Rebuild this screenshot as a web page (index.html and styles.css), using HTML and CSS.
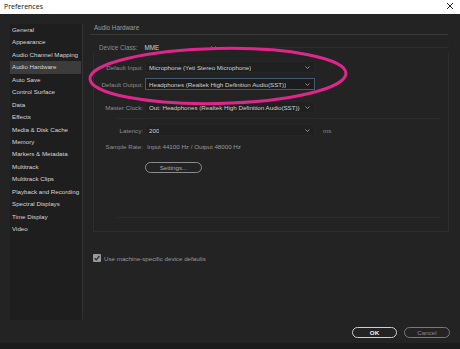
FILE: index.html
```html
<!DOCTYPE html>
<html>
<head>
<meta charset="utf-8">
<link rel="stylesheet" href="styles.css">
</head>
<body>
<div class="window">
  <div class="titlebar">
    <span class="title">Preferences</span>
    <svg class="close" width="8" height="8" viewBox="0 0 8 8"><path d="M1 1L7 7M7 1L1 7" stroke="#222" stroke-width="1" fill="none"/></svg>
  </div>
  <div class="main">
    <div class="content">
      <ul class="sidebar">
        <li>General</li>
        <li>Appearance</li>
        <li>Audio Channel Mapping</li>
        <li class="active">Audio Hardware</li>
        <li>Auto Save</li>
        <li>Control Surface</li>
        <li>Data</li>
        <li>Effects</li>
        <li>Media &amp; Disk Cache</li>
        <li>Memory</li>
        <li>Markers &amp; Metadata</li>
        <li>Multitrack</li>
        <li>Multitrack Clips</li>
        <li>Playback and Recording</li>
        <li>Spectral Displays</li>
        <li>Time Display</li>
        <li>Video</li>
      </ul>
      <div class="pane">
        <div class="section-title">Audio Hardware</div>
        <div class="device-row">
          <span class="device-label">Device Class:</span>
          <div class="select device-select"><span>MME</span><svg class="chev" width="5" height="3" viewBox="0 0 5 3"><path d="M0.5 0.5L2.5 2.5L4.5 0.5" stroke="#9a9a9a" stroke-width="0.9" fill="none"/></svg></div>
          <div class="device-line"></div>
        </div>
        <div class="group">
          <div class="grid r-input">
            <span class="label">Default Input:</span>
            <div class="select"><span class="val">Microphone (Yeti Stereo Microphone)</span><svg class="chev" width="5" height="3" viewBox="0 0 5 3"><path d="M0.5 0.5L2.5 2.5L4.5 0.5" stroke="#9a9a9a" stroke-width="0.9" fill="none"/></svg></div>
          </div>
          <div class="grid r-output">
            <span class="label">Default Output:</span>
            <div class="select focused"><span class="val">Headphones (Realtek High Definition Audio(SST))</span><svg class="chev" width="5" height="3" viewBox="0 0 5 3"><path d="M0.5 0.5L2.5 2.5L4.5 0.5" stroke="#9a9a9a" stroke-width="0.9" fill="none"/></svg></div>
          </div>
          <div class="grid r-clock">
            <span class="label">Master Clock:</span>
            <div class="select"><span class="val">Out: Headphones (Realtek High Definition Audio(SST))</span><svg class="chev" width="5" height="3" viewBox="0 0 5 3"><path d="M0.5 0.5L2.5 2.5L4.5 0.5" stroke="#9a9a9a" stroke-width="0.9" fill="none"/></svg></div>
          </div>
          <div class="sep sep1"></div>
          <div class="grid r-latency">
            <span class="label">Latency:</span>
            <div class="select"><span class="val">200</span><svg class="chev" width="5" height="3" viewBox="0 0 5 3"><path d="M0.5 0.5L2.5 2.5L4.5 0.5" stroke="#9a9a9a" stroke-width="0.9" fill="none"/></svg></div>
            <span class="unit">ms</span>
          </div>
          <div class="grid r-rate">
            <span class="label">Sample Rate:</span>
            <span class="plain">Input 44100 Hz / Output 48000 Hz</span>
          </div>
          <div class="settings-row"><button class="pill settings">Settings...</button></div>
          <div class="sep sep2"></div>
        </div>
        <div class="check-row">
          <span class="checkbox"><svg width="8" height="8" viewBox="0 0 8 8"><path d="M1.6 4.2L3.3 5.8L6.4 2" stroke="#2a2a2a" stroke-width="1.2" fill="none"/></svg></span>
          <span class="check-label">Use machine-specific device defaults</span>
        </div>
      </div>
    </div>
    <div class="actions">
      <button class="pill ok">OK</button>
      <button class="pill cancel">Cancel</button>
    </div>
  </div>
  <div class="strip"></div>
  <svg class="annot" width="460" height="349" viewBox="0 0 460 349">
    <ellipse cx="218" cy="76" rx="128" ry="27.5" transform="rotate(-1.2 218 76)" fill="none" stroke="#e0268c" stroke-width="3"/>
  </svg>
</div>
</body>
</html>
```
FILE: styles.css
```css
* { box-sizing: border-box; }
html, body { margin: 0; padding: 0; }
body {
  width: 460px;
  height: 349px;
  background: #232323;
  font-family: "Liberation Sans", Arial, sans-serif;
  overflow: hidden;
}
.window {
  position: relative;
  width: 460px;
  height: 349px;
  display: flex;
  flex-direction: column;
}
.titlebar {
  height: 14px;
  background: #ffffff;
  display: flex;
  align-items: center;
  justify-content: space-between;
  padding: 0 6px 2px 4px;
}
.title {
  font-family: "Open Sans", "Liberation Sans", sans-serif;
  font-size: 7px;
  color: #111;
}
.close { display: block; }
.main {
  flex: 1;
  display: flex;
  flex-direction: column;
  padding: 10px 10px 0 10px;
}
.content {
  display: flex;
  height: 296px;
}
.sidebar {
  list-style: none;
  margin: 0;
  padding: 0;
  width: 73px;
  background: #1e1e1e;
  border-right: 1px solid #333333;
  border-radius: 0 0 2px 2px;
  font-size: 6.2px;
  color: #d6d6d6;
}
.sidebar li {
  height: 12.45px;
  line-height: 12.45px;
  padding-left: 2px;
  white-space: nowrap;
  margin-right: 1px;
}
.sidebar li.active { background: #3c3c3c; }
.pane {
  margin-left: 7px;
  width: 359px;
  display: flex;
  flex-direction: column;
}
.section-title {
  height: 11px;
  line-height: 8px;
  padding-left: 4px;
  font-size: 6.3px;
  color: #9c9c9c;
  border-bottom: 1px solid #383838;
  margin-right: 1px;
}
.device-row {
  margin-top: 6px;
  display: flex;
  height: 12px;
  align-items: center;
  font-size: 6.3px;
}
.device-label {
  margin-left: 9px;
  color: #8e8e8e;
  white-space: nowrap;
}
.select {
  display: flex;
  align-items: center;
  justify-content: space-between;
  height: 12px;
  padding: 0 4px 0 3px;
  color: #d0d0d0;
  white-space: nowrap;
  overflow: hidden;
}
.val { overflow: hidden; }
.device-select {
  width: 78px;
  margin-left: 4px;
  padding-left: 3px;
}
.device-line {
  flex: 1;
  align-self: flex-start;
  height: 7px;
  border-bottom: 1px solid #2d2d2d;
  margin-left: 6px;
}
.chev { display: block; flex: none; margin-left: 2px; }
.group {
  margin-left: 3px;
  height: 179px;
  border: 1px solid #2d2d2d;
  border-top: none;
  padding-top: 8px;
  display: flex;
  flex-direction: column;
  font-size: 6.2px;
}
.grid {
  display: grid;
  grid-template-columns: 49px 170px auto;
  column-gap: 2px;
  align-items: center;
  height: 12px;
}
.label {
  text-align: right;
  color: #8e8e8e;
  white-space: nowrap;
}
.grid .select {
  background: #202020;
  border: 1px solid #262626;
}
.grid .select.focused {
  background: #1c1c1c;
  border: 1px solid #3f5a72;
}
.r-output { margin-top: 5px; }
.r-clock { margin-top: 11px; }
.sep {
  height: 1px;
  background: #2b2b2b;
  margin-left: 23px;
  margin-right: 8px;
}
.sep1 { margin-top: 5px; }
.r-latency { margin-top: 5px; }
.unit { color: #8e8e8e; margin-left: 6px; }
.r-rate { margin-top: 4px; }
.plain { color: #9a9a9a; white-space: nowrap; padding-left: 2px; grid-column: 2 / 4; }
.settings-row {
  margin-top: 10px;
  padding-left: 51px;
}
.pill {
  font-family: "Liberation Sans", Arial, sans-serif;
  font-size: 6.2px;
  height: 11px;
  border-radius: 6px;
  background: transparent;
  padding: 0;
  display: inline-flex;
  align-items: center;
  justify-content: center;
}
.settings {
  width: 57px;
  border: 1.2px solid #8c8c8c;
  color: #a8a8a8;
}
.sep2 { margin-top: 44px; }
.check-row {
  margin-top: 20px;
  display: flex;
  align-items: center;
  height: 12px;
  padding-left: 3px;
  font-size: 6.2px;
}
.checkbox {
  width: 8px;
  height: 8px;
  background: #9a9a9a;
  border-radius: 1px;
  display: flex;
  align-items: center;
  justify-content: center;
}
.checkbox svg { display: block; }
.check-label {
  margin-left: 3px;
  color: #999;
}
.actions {
  margin-top: 7px;
  display: flex;
  justify-content: flex-end;
  gap: 7px;
}
.ok {
  width: 45px;
  border: 1.4px solid #cfcfcf;
  color: #f0f0f0;
  font-weight: bold;
}
.cancel {
  width: 46px;
  border: 1.2px solid #7a7a7a;
  color: #8a8a8a;
}
.strip {
  height: 6px;
  background: #1b1b1b;
}
.annot {
  position: absolute;
  left: 0;
  top: 0;
  pointer-events: none;
}
```
